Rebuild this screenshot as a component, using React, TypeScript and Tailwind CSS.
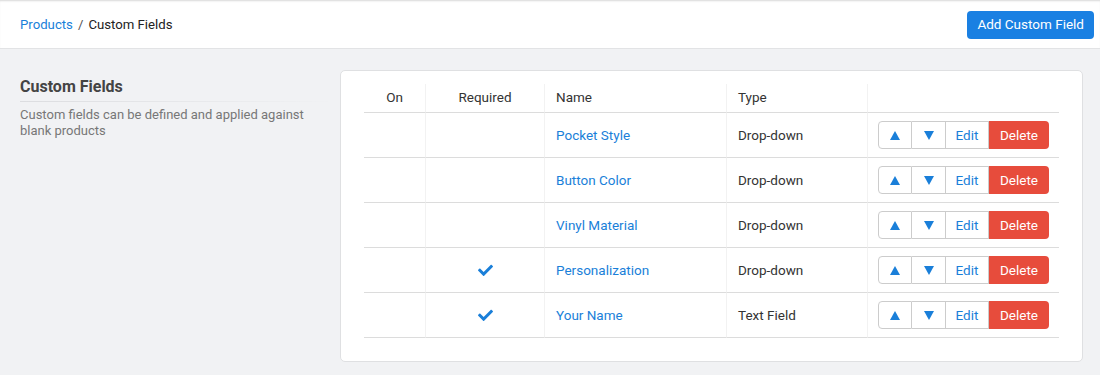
import { Fragment } from 'react';

const rows = [
  { name: 'Pocket Style', type: 'Drop-down', required: false },
  { name: 'Button Color', type: 'Drop-down', required: false },
  { name: 'Vinyl Material', type: 'Drop-down', required: false },
  { name: 'Personalization', type: 'Drop-down', required: true },
  { name: 'Your Name', type: 'Text Field', required: true },
];

function Check() {
  return (
    <svg width="15" height="12" viewBox="0 0 512 410" className="inline-block">
      <path
        fill="#1a7fd9"
        d="M173.9 400.6L7.5 234.2c-10-10-10-26.2 0-36.2l36.2-36.2c10-10 26.2-10 36.2 0L192 273.9 432.1 33.8c10-10 26.2-10 36.2 0l36.2 36.2c10 10 10 26.2 0 36.2L210.1 400.6c-10 10-26.2 10-36.2 0z"
      />
    </svg>
  );
}

function Tri({ down }: { down?: boolean }) {
  return (
    <svg width="10" height="9" viewBox="0 0 10 9">
      <path fill="#1a7fd9" d={down ? 'M0 0h10L5 9z' : 'M5 0L10 9H0z'} />
    </svg>
  );
}

export default function App() {
  return (
    <div className="min-h-[375px] bg-[#f1f2f4] text-[#333] font-['Roboto',sans-serif] text-[13.5px]">
      {/* Header */}
      <header className="h-[49px] bg-white border-b border-[#e2e3e5] shadow-[inset_0_2px_2px_-1px_#d8d8d8] flex items-center justify-between pl-5 pr-[6px]">
        <div className="text-[13.2px] flex items-center gap-[5px] pt-[1px]">
          <a className="text-[#1a7fd9]">Products</a>
          <span className="text-[#555]">/</span>
          <span className="text-[#222]">Custom Fields</span>
        </div>
        <button className="h-[28px] px-[10px] rounded-[4px] bg-[#1a80e2] text-white text-[13.5px] mt-[1px]">
          Add Custom Field
        </button>
      </header>

      <div className="flex pt-[21px] pl-5 pr-[17px] pb-[13px]">
        {/* Left intro */}
        <div className="w-[320px] pt-[7px]">
          <h2 className="text-[16px] font-bold text-[#444] leading-[19px]">Custom Fields</h2>
          <div className="mt-[5px] h-px w-[315px] bg-gradient-to-r from-[#dcdde0] to-[#f1f2f4]" />
          <p className="mt-[5px] text-[13px] leading-[16px] text-[#777] w-[300px]">
            Custom fields can be defined and applied against blank products
          </p>
        </div>

        {/* Card */}
        <div className="flex-1 bg-white border border-[#dfe0e2] rounded-[5px] px-[23px] pt-[13px] pb-[23px]">
          <div className="grid grid-cols-[62px_119px_182px_141px_1fr]">
            {['On', 'Required', 'Name', 'Type', ''].map((h, i) => (
              <div
                key={i}
                className={`h-[29px] pb-[2px] flex items-center border-b border-[#dcdcdc] text-[#333] ${
                  i < 4 ? 'border-r border-r-[#f2f2f2]' : ''
                } ${i < 2 ? 'justify-center' : 'pl-[11px]'}`}
              >
                {h}
              </div>
            ))}
            {rows.map(r => (
              <Fragment key={r.name}>
                <div className="h-[45px] border-b border-[#dcdcdc] border-r border-r-[#f2f2f2]" />
                <div className="h-[45px] border-b border-[#dcdcdc] border-r border-r-[#f2f2f2] flex items-center justify-center">
                  {r.required && <Check />}
                </div>
                <div className="h-[45px] border-b border-[#dcdcdc] border-r border-r-[#f2f2f2] flex items-center pl-[11px] text-[#1a7fd9]">
                  {r.name}
                </div>
                <div className="h-[45px] border-b border-[#dcdcdc] border-r border-r-[#f2f2f2] flex items-center pl-[11px] text-[#333]">
                  {r.type}
                </div>
                <div className="h-[45px] border-b border-[#dcdcdc] flex items-center pl-[10px]">
                  <div className="flex h-[28px]">
                    <button className="w-[34px] border border-[#ccc] rounded-l-[4px] flex items-center justify-center">
                      <Tri />
                    </button>
                    <button className="w-[34px] border border-l-0 border-[#ccc] flex items-center justify-center">
                      <Tri down />
                    </button>
                    <button className="w-[43px] border border-l-0 border-[#ccc] flex items-center justify-center text-[#1a7fd9]">
                      Edit
                    </button>
                    <button className="w-[60px] bg-[#e74c3c] rounded-r-[4px] flex items-center justify-center text-white">
                      Delete
                    </button>
                  </div>
                </div>
              </Fragment>
            ))}
          </div>
        </div>
      </div>
    </div>
  );
}
